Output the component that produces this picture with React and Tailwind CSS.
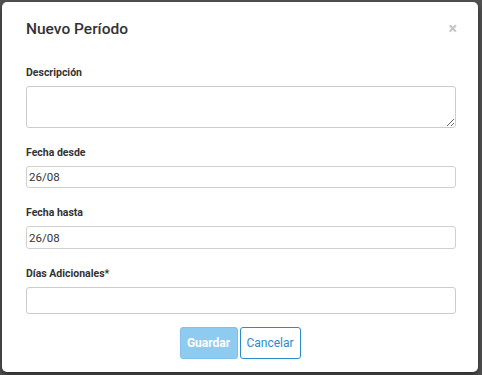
import React from "react";

function Field({ label, children, className = "" }) {
  return (
    <div className={className}>
      <label className="block text-[10.5px] leading-[14px] font-bold text-[#333] mb-[6px]">
        {label}
      </label>
      {children}
    </div>
  );
}

export default function App() {
  return (
    <div
      className="w-[482px] h-[375px] bg-[#525252] pt-[2px] pl-[2px] overflow-hidden"
      style={{ fontFamily: "Roboto, 'Liberation Sans', sans-serif" }}
    >
      <div className="w-[476px] h-[370px] bg-white rounded-[5px] shadow-[0_3px_6px_rgba(0,0,0,0.5)] pt-[17px] pl-[24px] pr-[22px]">
        {/* Header */}
        <div className="flex items-center justify-between h-[20px] mb-[27px]">
          <h2 className="text-[15.5px] leading-[20px] font-medium text-[#333]">Nuevo Período</h2>
          <button className="text-[16px] leading-none text-[#c4c4c4] font-bold -mr-[1px]">×</button>
        </div>

        <Field label="Descripción" className="mb-[18px]">
          <textarea className="block w-full h-[42px] border border-[#ccc] rounded-[3px] resize-y outline-none" />
        </Field>

        <Field label="Fecha desde" className="mb-[18px]">
          <input
            defaultValue="26/08"
            className="block w-full h-[22px] border border-[#d0d0d0] rounded-[3px] px-[2px] text-[11.5px] text-[#333] outline-none"
          />
        </Field>

        <Field label="Fecha hasta" className="mb-[18px]">
          <input
            defaultValue="26/08"
            className="block w-full h-[23px] border border-[#d0d0d0] rounded-[3px] px-[2px] text-[11.5px] text-[#333] outline-none"
          />
        </Field>

        <Field label="Días Adicionales*" className="mb-[13px]">
          <input className="block w-full h-[27px] border border-[#ccc] rounded-[3px] outline-none" />
        </Field>

        <div className="flex justify-center gap-[2px] -ml-[2px]">
          <button className="w-[58px] h-[32px] rounded-[3px] bg-[#8ecbf1] border border-[#80c0ea] text-white text-[12px] font-bold">
            Guardar
          </button>
          <button className="w-[61px] h-[32px] rounded-[3px] bg-white border border-[#2b8acb] text-[#2b8acb] text-[12px]">
            Cancelar
          </button>
        </div>
      </div>
    </div>
  );
}
